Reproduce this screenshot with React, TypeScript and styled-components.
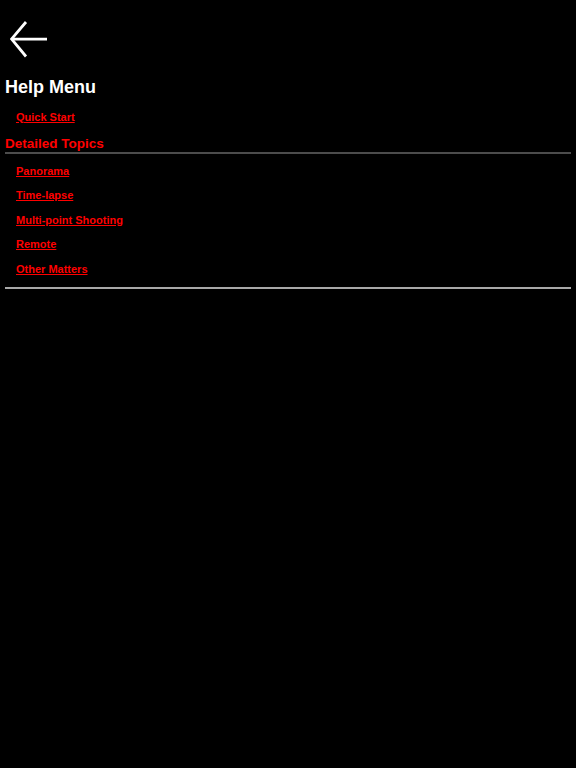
import styled, { createGlobalStyle } from "styled-components";

const GlobalStyle = createGlobalStyle`
  html, body {
    margin: 0;
    background: #000;
  }
  body {
    font-family: "Liberation Sans", Arial, sans-serif;
    color: #fff;
  }
`;

const Page = styled.div`
  padding: 0 5px;
`;

const BackButton = styled.button`
  display: block;
  background: none;
  border: none;
  padding: 0;
  margin: 20px 0 0 5px;
  width: 40px;
  height: 40px;
  cursor: pointer;
  svg {
    display: block;
  }
`;

const Title = styled.h1`
  font-size: 18px;
  font-weight: bold;
  margin: 17px 0 0;
  line-height: 21px;
`;

const LinkList = styled.ul<{ $top: number }>`
  list-style: none;
  margin: ${(p) => p.$top}px 0 0;
  padding: 0 0 0 11px;
  display: flex;
  flex-direction: column;
  gap: 11.5px;
`;

const Item = styled.li`
  font-size: 11px;
  line-height: 13px;
`;

const TopicLink = styled.a`
  color: #ff0000;
  font-weight: bold;
  text-decoration: underline;
`;

const Section = styled.h2`
  color: #ff0000;
  font-size: 13.5px;
  font-weight: bold;
  margin: 11px 0 0;
  line-height: 17px;
  border-bottom: 2px solid #4c4c4c;
`;

const Rule = styled.hr`
  border: none;
  border-top: 2px solid #a8a8a8;
  margin: 11.5px 0 0;
`;

const topics = ["Panorama", "Time-lapse", "Multi-point Shooting", "Remote", "Other Matters"];

export default function App() {
  return (
    <>
      <GlobalStyle />
      <Page>
        <BackButton aria-label="Back">
          <svg width="40" height="40" viewBox="0 0 40 40" fill="none" stroke="#fff" strokeWidth="2.75">
            <path d="M2 19 H37" />
            <path d="M16 2 L1.5 19 L16 36.5" />
          </svg>
        </BackButton>
        <Title>Help Menu</Title>
        <LinkList $top={13}>
          <Item>
            <TopicLink href="#">Quick Start</TopicLink>
          </Item>
        </LinkList>
        <Section>Detailed Topics</Section>
        <LinkList $top={10.5}>
          {topics.map((t) => (
            <Item key={t}>
              <TopicLink href="#">{t}</TopicLink>
            </Item>
          ))}
        </LinkList>
        <Rule />
      </Page>
    </>
  );
}
